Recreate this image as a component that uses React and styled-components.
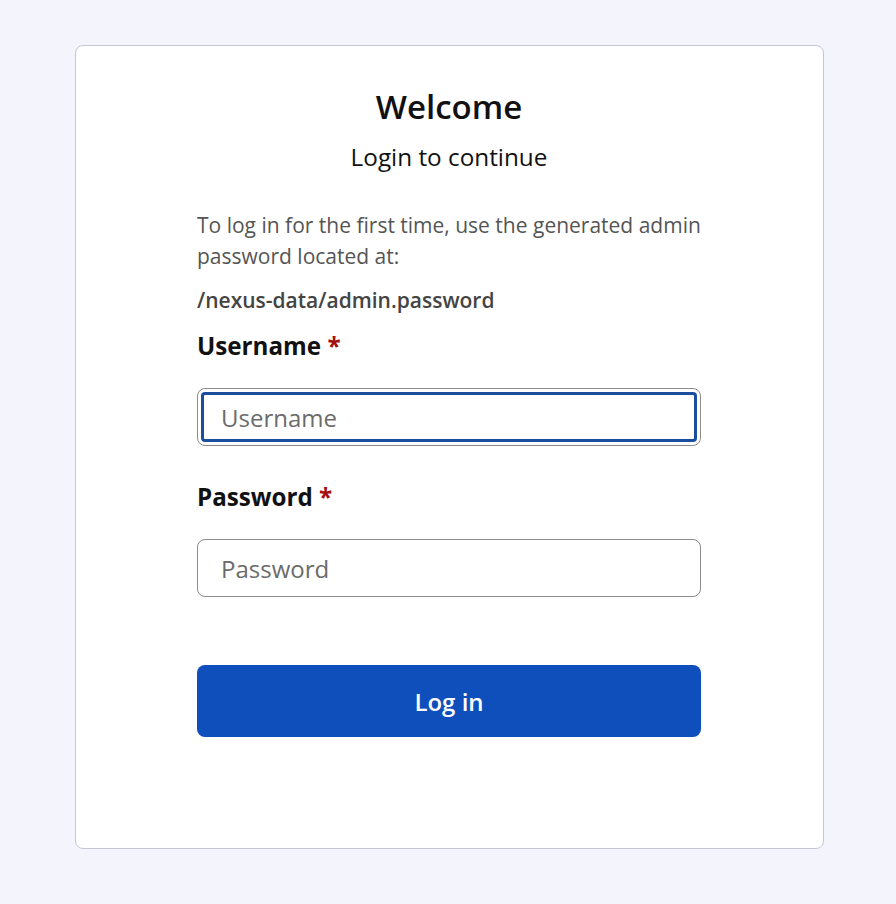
import React from "react";
import styled, { createGlobalStyle } from "styled-components";

// --------------------------------------------------

const Global = createGlobalStyle`
	html, body {
		margin: 0;
		padding: 0;
		background: #f3f4fc;
		font-family: "Open Sans", "Noto Sans", sans-serif;
	}
`;

const Page = styled.div`
	min-height: 904px;
	padding: 45px 0 0 75px;
	box-sizing: border-box;
	display: flex;
	align-items: flex-start;
`;

const Card = styled.div`
	width: 749px;
	height: 804px;
	box-sizing: border-box;
	background: #ffffff;
	border: 1px solid #c3c7d3;
	border-radius: 8px;
	padding: 42px 122px 0 121px;
	display: flex;
	flex-direction: column;
`;

const Title = styled.h1`
	margin: 0;
	font-size: 33px;
	line-height: 38px;
	font-weight: 600;
	color: #111;
	text-align: center;
`;

const Subtitle = styled.h2`
	margin: 17px 0 0;
	font-size: 24.3px;
	line-height: 28px;
	font-weight: 400;
	color: #111;
	text-align: center;
`;

const Note = styled.p`
	margin: ${({ top }) => top}px 0 0;
	font-size: 21px;
	line-height: 31px;
	font-weight: ${({ strong }) => strong ? 600 : 400};
	color: ${({ strong }) => strong ? "#444" : "#555"};
`;

const Label = styled.label`
	display: block;
	margin: ${({ top }) => top}px 0 0;
	font-size: 24.2px;
	line-height: 28px;
	font-weight: 700;
	color: #111;
`;

const Star = styled.span`
	color: #a50e0e;
`;

const Input = styled.input`
	display: block;
	margin-top: 28px;
	width: 100%;
	height: 58px;
	box-sizing: border-box;
	padding: 0 23px;
	border: 1px solid #8c8c8c;
	border-radius: 8px;
	font-family: inherit;
	font-size: 24px;
	color: #222;
	background: #fff;
	outline: ${({ focused }) => focused ? "3px solid #1b4e9f" : "none"};
	outline-offset: -7px;

	&::placeholder {
		color: #6b6b6b;
	}
`;

const Button = styled.button`
	margin-top: 68px;
	width: 100%;
	height: 72px;
	border: none;
	border-radius: 8px;
	background: #0f4fbb;
	color: #fff;
	font-family: inherit;
	font-size: 24px;
	font-weight: 600;
	cursor: pointer;
`;

// --------------------------------------------------

const App = () => (
	<>
		<Global />
		<Page>
			<Card>
				<Title>Welcome</Title>
				<Subtitle>Login to continue</Subtitle>

				<Note top = { 39 }>
					To log in for the first time, use the generated admin password located at:
				</Note>
				<Note top = { 13 } strong>/nexus-data/admin.password</Note>

				<Label top = { 16 }>Username <Star>*</Star></Label>
				<Input placeholder = "Username" focused />

				<Label top = { 37 }>Password <Star>*</Star></Label>
				<Input placeholder = "Password" type = "password" />

				<Button>Log in</Button>
			</Card>
		</Page>
	</>
);

export default App;
